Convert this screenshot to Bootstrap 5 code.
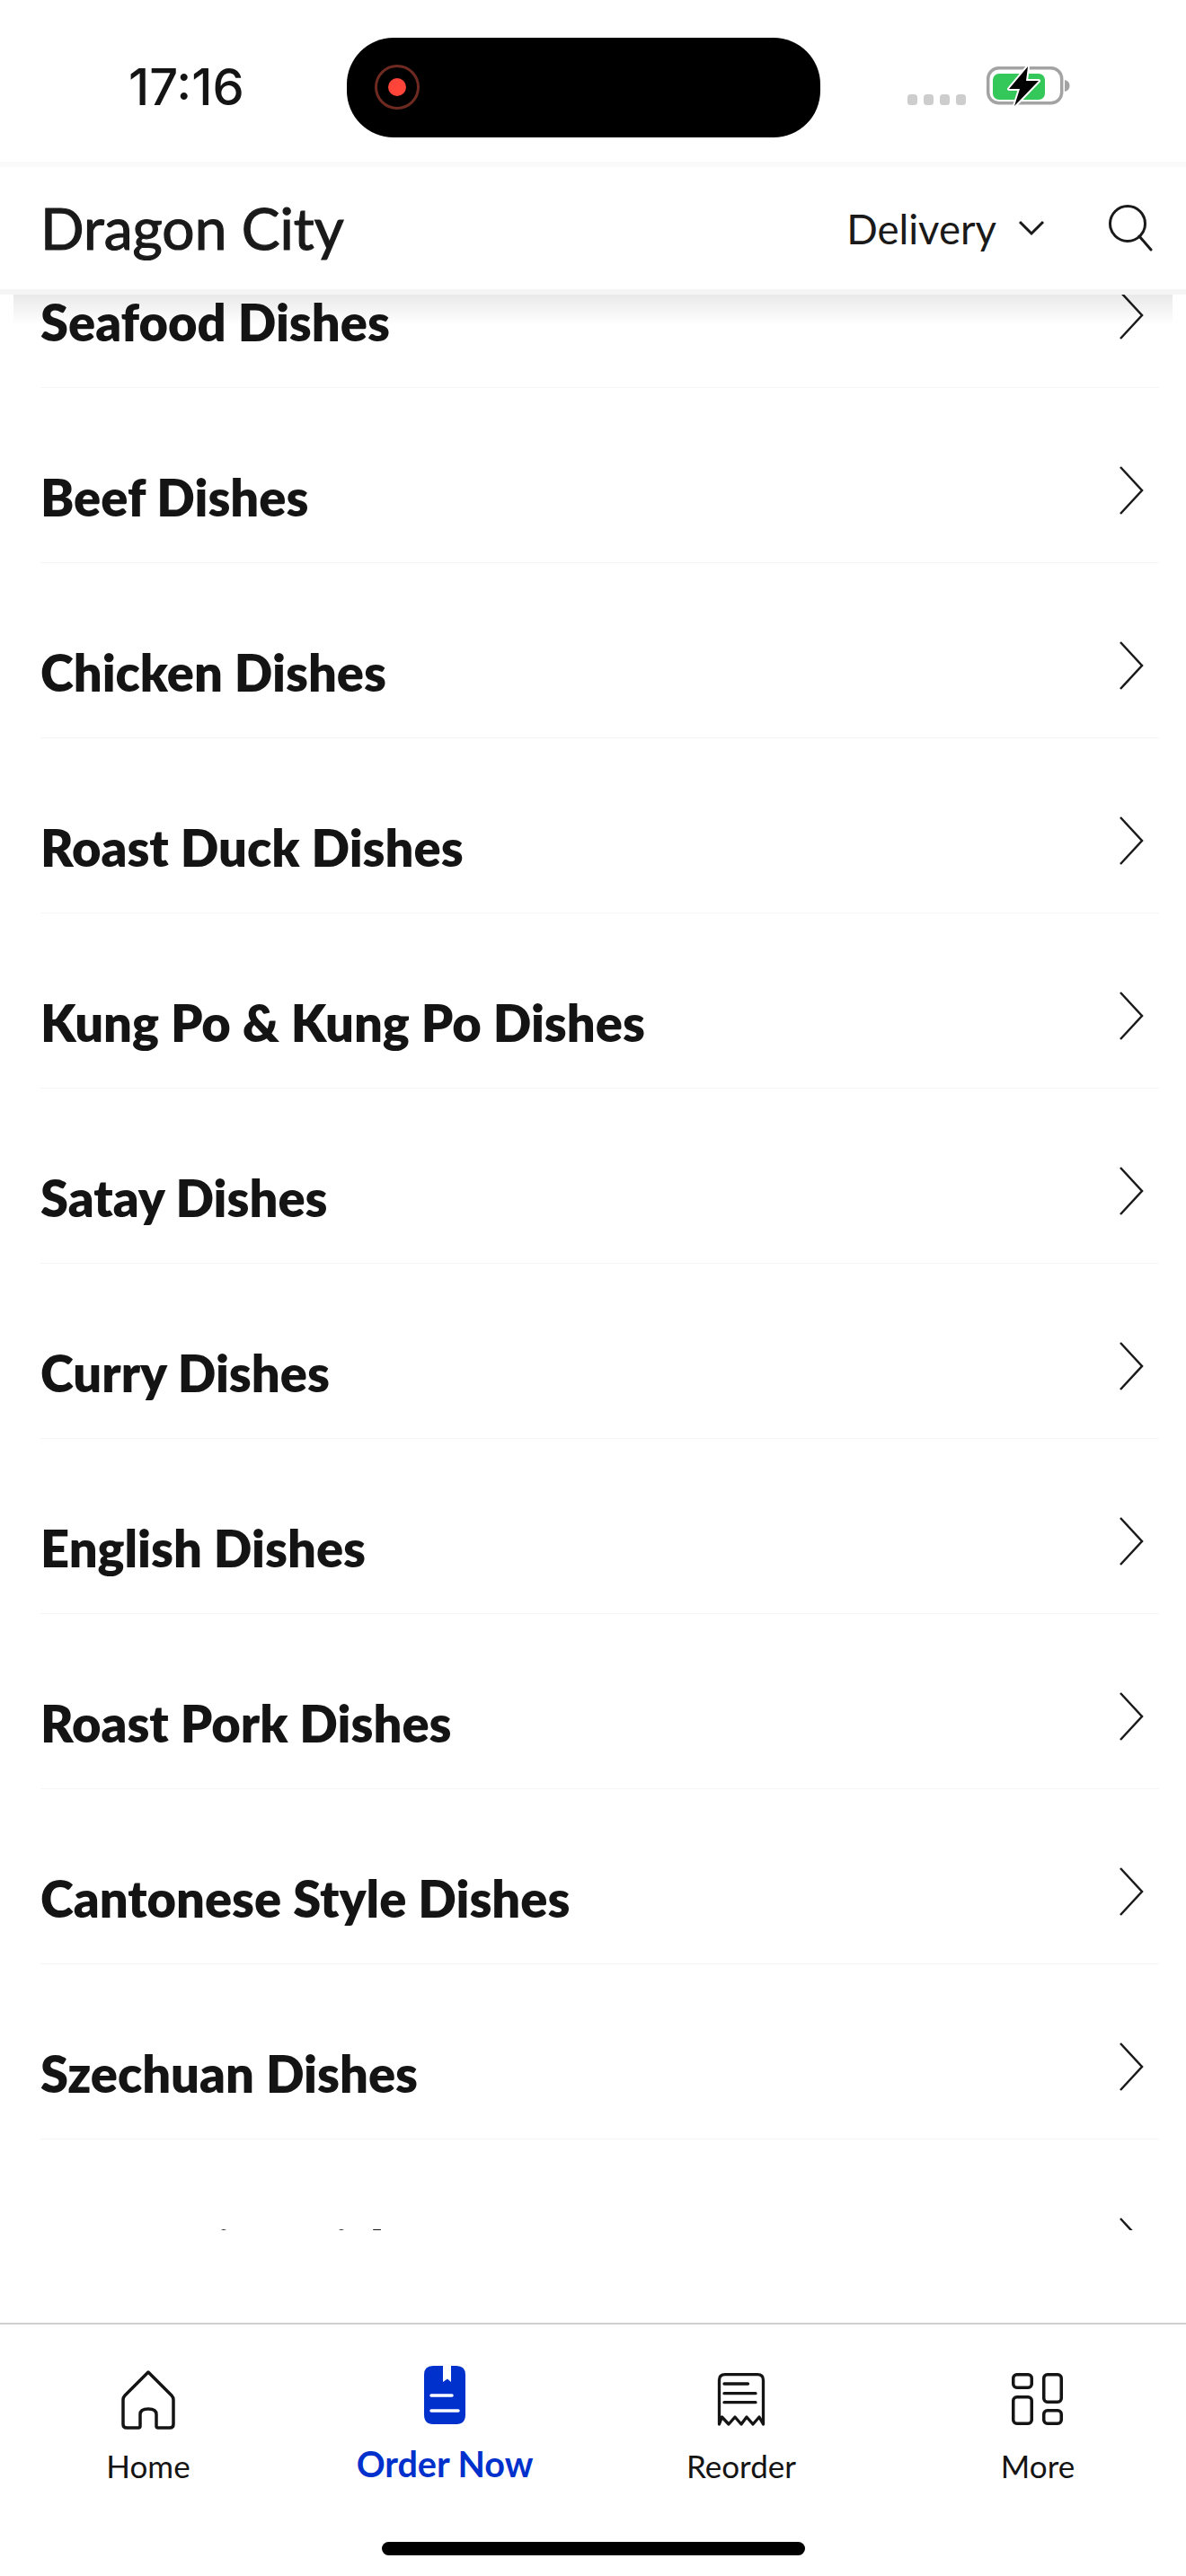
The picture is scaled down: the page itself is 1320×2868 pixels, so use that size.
<!DOCTYPE html>
<html lang="en">
<head>
<meta charset="utf-8">
<title>Dragon City</title>
<link href="https://cdn.jsdelivr.net/npm/bootstrap@5.3.0/dist/css/bootstrap.min.css" rel="stylesheet">
<style>
html,body{margin:0;height:2868px;overflow:hidden;background:#fff;font-family:"Lato","Liberation Sans",sans-serif;color:#141414}
.phone{height:2868px;width:1320px}
.statusbar{height:180px;flex:none;padding-top:14px}
.clock{font-family:"Inter","Liberation Sans",sans-serif;font-weight:500;font-size:56px;line-height:1;margin-left:143px;width:243px}
.island{width:527px;height:111px;border-radius:52px;background:#000;padding-left:31px}
.status-right{margin-left:97px;margin-top:2px}
.appbar{height:148px;flex:none;background:#fff;border-top:6px solid #fafafa;border-bottom:6px solid #f5f5f5;padding:0 0 0 45px;position:relative;z-index:2;flex-wrap:nowrap}
.appbar::after{content:"";position:absolute;left:15px;right:15px;top:100%;margin-top:6px;height:34px;background:linear-gradient(rgba(0,0,0,.085),rgba(0,0,0,0));pointer-events:none}
.brand-name{font-size:64px;font-weight:400;-webkit-text-stroke:1.2px #1a1a1a;line-height:1;color:#1a1a1a}
.mode{font-size:45.500px;line-height:1;color:#1a1a1a;margin-right:24px;padding-top:2px}
.mode-ic{margin-right:71px}
.search-ic{margin-right:36px}
.scroller{flex:none;height:2155px;overflow:hidden}
.dish-list{margin-top:-91px;background:transparent}
.dish-row{height:195px;margin:0 30px 0 45px;padding:0 17px 0 0;border:0;border-bottom:2px solid #f5f5f5;border-radius:0;background:transparent;display:flex;justify-content:space-between;align-items:flex-start;color:#141414}
.dish-name{font-size:56px;font-weight:800;line-height:68px;padding-top:88px}
.dish-chev{margin-top:86px;flex:none}
.tabbar{height:282px;flex:none;border-top:2px solid #d0d0d0;background:#fff}
.tab-item{text-align:center;height:193px;padding-top:48px}
.tab-active{padding-top:46px}
.tab-ic{display:block;margin:0 auto;height:70px}
.tab-ic-on{height:66px}
.tab-label{font-size:35px;line-height:44px;margin-top:17px;color:#141414}
.tab-on{font-size:39.500px;font-weight:700;color:#0031cc;margin-top:21px}
.home-bar{width:471px;height:15px;border-radius:8px;background:#000;margin:49px auto 0 auto}
</style>
</head>
<body>
<div class="phone d-flex flex-column">
  <div class="statusbar d-flex align-items-center">
    <div class="clock">17:16</div>
    <div class="island d-flex align-items-center">
      <svg width="50" height="50" viewBox="0 0 50 50"><circle cx="25" cy="25" r="23.5" fill="none" stroke="#6e2a20" stroke-width="3"/><circle cx="25" cy="25" r="10" fill="#ff453a"/></svg>
    </div>
    <div class="status-right">
      <svg width="192" height="50" viewBox="0 0 192 50">
        <g fill="#cdcdcd"><rect x="0" y="32" width="11" height="12" rx="3.5"/><rect x="18" y="32" width="11" height="12" rx="3.5"/><rect x="36" y="32" width="11" height="12" rx="3.5"/><rect x="54" y="32" width="11" height="12" rx="3.5"/></g>
        <rect x="89.7" y="2.7" width="82" height="39" rx="12" fill="none" stroke="#a3a3a3" stroke-width="3.5"/>
        <path d="M175 16c4 1 5.5 3.5 5.5 6.5s-1.500 5.500-5.500 6.500z" fill="#a3a3a3"/>
        <rect x="95" y="9" width="58" height="29" rx="7" fill="#34c759"/>
        <path d="M134 1 L113 26 H125 L119 45 L146 17 H132 Z" fill="#000" stroke="#fff" stroke-width="4" stroke-linejoin="round" paint-order="stroke"/>
      </svg>
    </div>
  </div>

  <nav class="navbar appbar">
    <span class="brand-name">Dragon City</span>
    <div class="d-flex align-items-center ms-auto">
      <span class="mode">Delivery</span>
      <svg class="mode-ic" width="30" height="18" viewBox="0 0 30 18"><path d="M2 2 L15 15 L28 2" fill="none" stroke="#1a1a1a" stroke-width="3"/></svg>
      <svg class="search-ic" width="50" height="52" viewBox="0 0 50 52"><circle cx="21" cy="21" r="19.500" fill="none" stroke="#1a1a1a" stroke-width="3"/><path d="M34 35 L47 50" stroke="#1a1a1a" stroke-width="3" stroke-linecap="round"/></svg>
    </div>
  </nav>

  <div class="scroller">
    <div class="list-group list-group-flush dish-list">
      <div class="list-group-item dish-row"><span class="dish-name">Seafood Dishes</span><svg class="dish-chev" width="28" height="56" viewBox="0 0 28 56"><path d="M2 2 L26 28 L2 54" fill="none" stroke="#1a1a1a" stroke-width="2.500"/></svg></div>
      <div class="list-group-item dish-row"><span class="dish-name">Beef Dishes</span><svg class="dish-chev" width="28" height="56" viewBox="0 0 28 56"><path d="M2 2 L26 28 L2 54" fill="none" stroke="#1a1a1a" stroke-width="2.500"/></svg></div>
      <div class="list-group-item dish-row"><span class="dish-name">Chicken Dishes</span><svg class="dish-chev" width="28" height="56" viewBox="0 0 28 56"><path d="M2 2 L26 28 L2 54" fill="none" stroke="#1a1a1a" stroke-width="2.500"/></svg></div>
      <div class="list-group-item dish-row"><span class="dish-name">Roast Duck Dishes</span><svg class="dish-chev" width="28" height="56" viewBox="0 0 28 56"><path d="M2 2 L26 28 L2 54" fill="none" stroke="#1a1a1a" stroke-width="2.500"/></svg></div>
      <div class="list-group-item dish-row"><span class="dish-name">Kung Po &amp; Kung Po Dishes</span><svg class="dish-chev" width="28" height="56" viewBox="0 0 28 56"><path d="M2 2 L26 28 L2 54" fill="none" stroke="#1a1a1a" stroke-width="2.500"/></svg></div>
      <div class="list-group-item dish-row"><span class="dish-name">Satay Dishes</span><svg class="dish-chev" width="28" height="56" viewBox="0 0 28 56"><path d="M2 2 L26 28 L2 54" fill="none" stroke="#1a1a1a" stroke-width="2.500"/></svg></div>
      <div class="list-group-item dish-row"><span class="dish-name">Curry Dishes</span><svg class="dish-chev" width="28" height="56" viewBox="0 0 28 56"><path d="M2 2 L26 28 L2 54" fill="none" stroke="#1a1a1a" stroke-width="2.500"/></svg></div>
      <div class="list-group-item dish-row"><span class="dish-name">English Dishes</span><svg class="dish-chev" width="28" height="56" viewBox="0 0 28 56"><path d="M2 2 L26 28 L2 54" fill="none" stroke="#1a1a1a" stroke-width="2.500"/></svg></div>
      <div class="list-group-item dish-row"><span class="dish-name">Roast Pork Dishes</span><svg class="dish-chev" width="28" height="56" viewBox="0 0 28 56"><path d="M2 2 L26 28 L2 54" fill="none" stroke="#1a1a1a" stroke-width="2.500"/></svg></div>
      <div class="list-group-item dish-row"><span class="dish-name">Cantonese Style Dishes</span><svg class="dish-chev" width="28" height="56" viewBox="0 0 28 56"><path d="M2 2 L26 28 L2 54" fill="none" stroke="#1a1a1a" stroke-width="2.500"/></svg></div>
      <div class="list-group-item dish-row"><span class="dish-name">Szechuan Dishes</span><svg class="dish-chev" width="28" height="56" viewBox="0 0 28 56"><path d="M2 2 L26 28 L2 54" fill="none" stroke="#1a1a1a" stroke-width="2.500"/></svg></div>
      <div class="list-group-item dish-row"><span class="dish-name">Vegetarian Dishes</span><svg class="dish-chev" width="28" height="56" viewBox="0 0 28 56"><path d="M2 2 L26 28 L2 54" fill="none" stroke="#1a1a1a" stroke-width="2.500"/></svg></div>
    </div>
  </div>

  <div class="flex-grow-1"></div>

  <div class="tabbar">
    <div class="row g-0">
      <div class="col-3 tab-item">
        <svg class="tab-ic" width="60" height="70" viewBox="0 0 60 70"><path d="M30 5 L4 31 Q2 33 2 36 V63 Q2 67 6 67 H19 Q21 67 21 65 V52 Q21 46 30 46 Q39 46 39 52 V65 Q39 67 41 67 H54 Q58 67 58 63 V36 Q58 33 56 31 Z" fill="none" stroke="#141414" stroke-width="3.500" stroke-linejoin="round"/></svg>
        <div class="tab-label">Home</div>
      </div>
      <div class="col-3 tab-item tab-active">
        <svg class="tab-ic tab-ic-on" width="46" height="66" viewBox="0 0 46 66"><path d="M10 0 H21 V18 L26 14.500 L30 18 V0 H36 Q46 0 46 10 V54 Q46 65 36 65 H10 Q0 65 0 54 V10 Q0 0 10 0 Z" fill="#0031cc"/><path d="M8 33 H31 M8 50 H38" stroke="#fff" stroke-width="3.500" stroke-linecap="round"/></svg>
        <div class="tab-label tab-on">Order Now</div>
      </div>
      <div class="col-3 tab-item">
        <svg class="tab-ic" width="56" height="70" viewBox="0 0 56 70"><path d="M3.500 63 V14 Q3.500 7.700 10 7.700 H46 Q52.500 7.700 52.500 14 V63 L48 55 L41 63 L34 55 L28 63 L21 55 L14 63 L6.500 55 Z" fill="none" stroke="#141414" stroke-width="3.300" stroke-linejoin="round"/><path d="M9 18 H35.500 M9 28.700 H44 M9 38.700 H44" stroke="#141414" stroke-width="3.300" stroke-linecap="round"/></svg>
        <div class="tab-label">Reorder</div>
      </div>
      <div class="col-3 tab-item">
        <svg class="tab-ic" width="60" height="70" viewBox="0 0 60 70"><g fill="none" stroke="#141414" stroke-width="3.500"><rect x="2.750" y="7.750" width="20.500" height="14.500" rx="4"/><rect x="36.750" y="7.750" width="19.500" height="30.500" rx="4"/><rect x="2.750" y="32.750" width="20.500" height="29.500" rx="4"/><rect x="36.750" y="47.750" width="19.500" height="14.500" rx="4"/></g></svg>
        <div class="tab-label">More</div>
      </div>
    </div>
    <div class="home-bar"></div>
  </div>
</div>
<script src="https://cdn.jsdelivr.net/npm/bootstrap@5.3.0/dist/js/bootstrap.bundle.min.js"></script>
</body>
</html>
